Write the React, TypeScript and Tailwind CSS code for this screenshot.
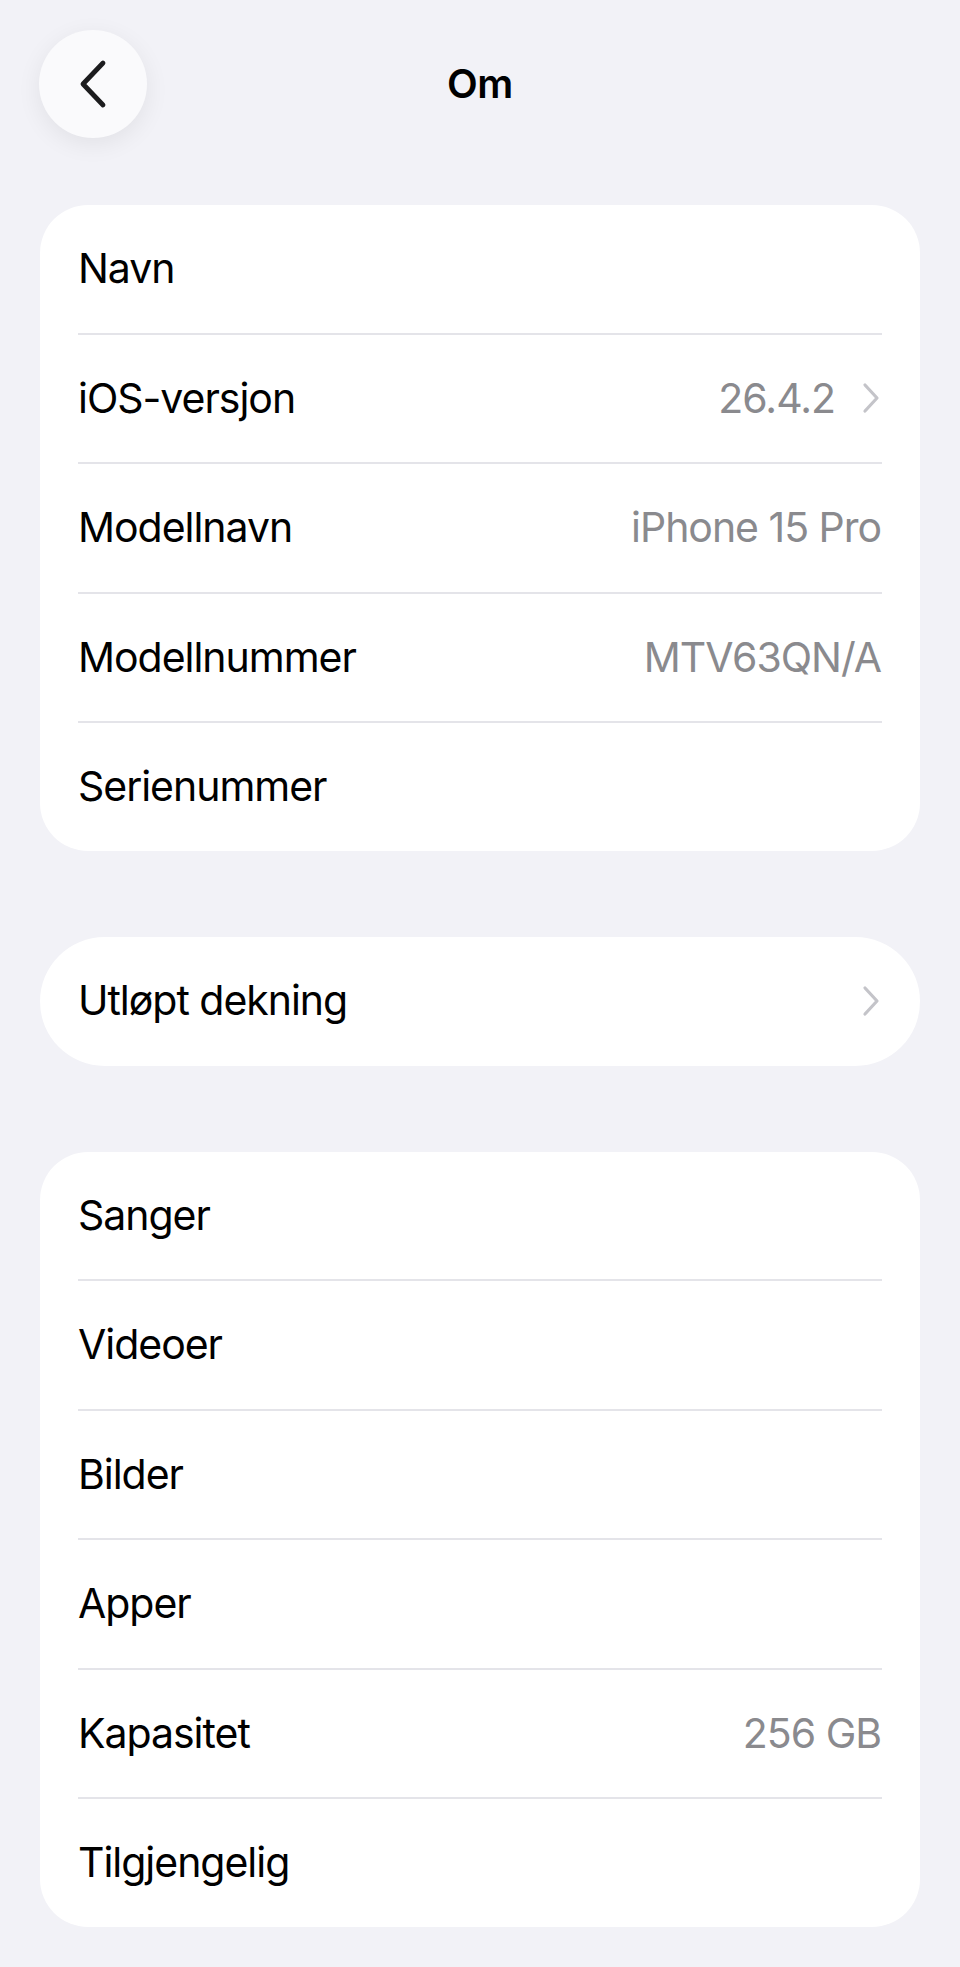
import React from 'react';

type Row = { label: string; value?: string; chevron?: boolean };

const aboutRows: Row[] = [
  { label: 'Navn' },
  { label: 'iOS-versjon', value: '26.4.2', chevron: true },
  { label: 'Modellnavn', value: 'iPhone 15 Pro' },
  { label: 'Modellnummer', value: 'MTV63QN/A' },
  { label: 'Serienummer' },
];

const storageRows: Row[] = [
  { label: 'Sanger' },
  { label: 'Videoer' },
  { label: 'Bilder' },
  { label: 'Apper' },
  { label: 'Kapasitet', value: '256 GB' },
  { label: 'Tilgjengelig' },
];

function Chevron() {
  return (
    <svg width="20" height="32" viewBox="0 0 20 32" fill="none" className="shrink-0">
      <path d="M4 3 L16 16 L4 29" stroke="#c4c4c9" strokeWidth="3.2" strokeLinecap="round" strokeLinejoin="round" />
    </svg>
  );
}

function ListRow({ row }: { row: Row }) {
  return (
    <div className="flex h-[127.5px] items-center justify-between pl-[38px] pr-[39px]">
      <span className="text-black">{row.label}</span>
      <div className="flex items-center gap-[26px]">
        {row.value && <span className="text-[#8a8a8e]">{row.value}</span>}
        {row.chevron && <Chevron />}
      </div>
    </div>
  );
}

function Group({ rows }: { rows: Row[] }) {
  return (
    <div className="overflow-hidden rounded-[48px] bg-white">
      {rows.map((row, i) => (
        <div key={row.label}>
          {i > 0 && <div className="mx-[38px] h-[2px] bg-[#e4e4e9]" />}
          <ListRow row={row} />
        </div>
      ))}
    </div>
  );
}

export default function App() {
  return (
    <div
      className="min-h-[1967px] bg-[#f2f2f7] px-[40px] pt-[30px] pb-[39px] text-[41px] tracking-[-0.025em]"
      style={{ fontFamily: 'Inter, "Liberation Sans", sans-serif' }}
    >
      <div className="relative flex h-[108px] items-center justify-center">
        <button className="absolute left-[-1px] top-0 flex h-[108px] w-[108px] items-center justify-center rounded-full bg-[#fafafc] shadow-[0_6px_24px_rgba(0,0,0,0.07)]">
          <svg width="32" height="50" viewBox="0 0 32 50" fill="none">
            <path d="M26 4 L6 25 L26 46" stroke="#1c1c1e" strokeWidth="4.8" strokeLinecap="round" strokeLinejoin="round" />
          </svg>
        </button>
        <h1 className="text-[40px] font-semibold tracking-[-0.01em] text-black">Om</h1>
      </div>

      <div className="mt-[67px] flex flex-col gap-[86px]">
        <Group rows={aboutRows} />

        <div className="flex h-[129px] items-center justify-between rounded-full bg-white pl-[38px] pr-[39px]">
          <span className="text-black">Utløpt dekning</span>
          <Chevron />
        </div>

        <Group rows={storageRows} />
      </div>
    </div>
  );
}
